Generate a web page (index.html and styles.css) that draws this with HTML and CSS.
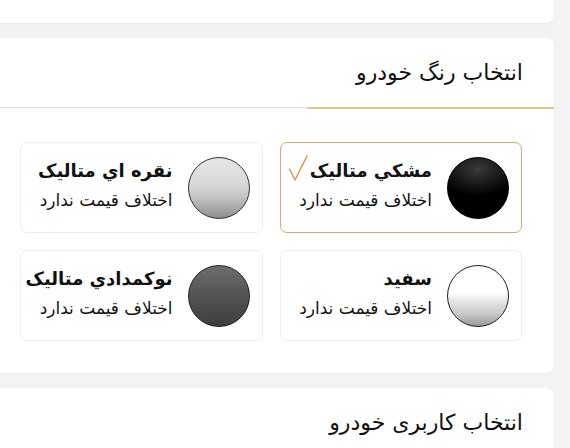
FILE: index.html
```html
<!DOCTYPE html>
<html lang="fa" dir="rtl">
<head>
<meta charset="utf-8">
<link rel="stylesheet" href="styles.css">
</head>
<body>
<div class="page">
  <div class="card card-top"></div>

  <section class="card">
    <div class="card-head"><h2 class="title">انتخاب رنگ خودرو</h2></div>
    <div class="divider"><span class="active"></span><span class="rest"></span></div>
    <div class="options">
      <div class="option selected">
        <span class="swatch black"></span>
        <div class="info">
          <div class="name"><span>مشکي متاليک</span><svg class="check" width="20" height="26" viewBox="0 0 20 26"><path d="M1.5 14 L7 25 L19 1" fill="none" stroke="#cf9b55" stroke-width="1.5" stroke-linecap="round" stroke-linejoin="round"/></svg></div>
          <div class="sub">اختلاف قيمت ندارد</div>
        </div>
      </div>
      <div class="option">
        <span class="swatch silver"></span>
        <div class="info">
          <div class="name"><span>نقره اي متاليک</span></div>
          <div class="sub">اختلاف قيمت ندارد</div>
        </div>
      </div>
      <div class="option">
        <span class="swatch white"></span>
        <div class="info">
          <div class="name"><span>سفيد</span></div>
          <div class="sub">اختلاف قيمت ندارد</div>
        </div>
      </div>
      <div class="option">
        <span class="swatch gray"></span>
        <div class="info">
          <div class="name"><span>نوکمدادي متاليک</span></div>
          <div class="sub">اختلاف قيمت ندارد</div>
        </div>
      </div>
    </div>
  </section>

  <section class="card card-last">
    <div class="card-head"><h2 class="title">انتخاب کاربری خودرو</h2></div>
  </section>
</div>
</body>
</html>
```
FILE: styles.css
```css
html, body {
  margin: 0;
  padding: 0;
  background: #f2f3f5;
  height: 100%;
  overflow: hidden;
}
body {
  font-family: "DejaVu Sans", "Noto Sans", sans-serif;
  color: #111;
  direction: rtl;
}
.page {
  display: flex;
  flex-direction: column;
  gap: 15px;
  padding-left: 0;
  padding-right: 16px;
  margin-left: -10px;
}
.card {
  background: #fff;
  border-radius: 8px;
  box-shadow: 0 1px 3px rgba(0,0,0,0.04);
}
.card-top {
  height: 23px;
  border-radius: 0 0 8px 8px;
}
.card-head {
  height: 69px;
  display: flex;
  align-items: center;
  padding-right: 31px;
}
.title {
  margin: 0;
  font-size: 22px;
  font-weight: normal;
  line-height: 1;
}
.divider {
  display: flex;
  height: 2px;
  align-items: flex-start;
}
.divider .active {
  width: 247px;
  height: 2px;
  background: #e6c77f;
}
.divider .rest {
  flex: 1;
  height: 1px;
  background: #e3e3e3;
}
.options {
  display: grid;
  grid-template-columns: 1fr 1fr;
  gap: 17px;
  padding: 33px 32px 32px 30px;
}
.option {
  height: 91px;
  box-sizing: border-box;
  border: 1px solid #eeeeee;
  border-radius: 7px;
  display: flex;
  align-items: center;
  gap: 15px;
  padding: 0 12px;
  min-width: 0;
}
.option.selected {
  border: 1.5px solid #d9a86a;
}
.swatch {
  width: 62px;
  height: 62px;
  box-sizing: border-box;
  border-radius: 50%;
  border: 1px solid #222;
  flex: none;
}
.swatch.black {
  background: radial-gradient(ellipse 70% 45% at 50% 18%, #3a3a3a 0%, #111 70%, #000 100%);
  border-color: #000;
}
.swatch.silver {
  background: linear-gradient(to bottom, #e6e6e6 0%, #dadada 40%, #c4c4c4 65%, #8e8e8e 100%);
  border-color: #333;
}
.swatch.white {
  background: linear-gradient(to bottom, #ffffff 0%, #ffffff 45%, #e6e6e6 58%, #c8c8c8 80%, #999 100%);
}
.swatch.gray {
  background: linear-gradient(to bottom, #6e6e6e 0%, #555 45%, #3e3e3e 100%);
}
.info {
  display: flex;
  flex-direction: column;
  gap: 4px;
  margin-top: -6px;
  white-space: nowrap;
}
.name {
  font-size: 18px;
  font-weight: bold;
  line-height: 26px;
  display: flex;
  align-items: center;
  gap: 2px;
}
.check {
  margin-top: -6px;
  flex: none;
}
.sub {
  font-size: 17px;
  line-height: 24px;
}
.card-last {
  height: 80px;
}
```
